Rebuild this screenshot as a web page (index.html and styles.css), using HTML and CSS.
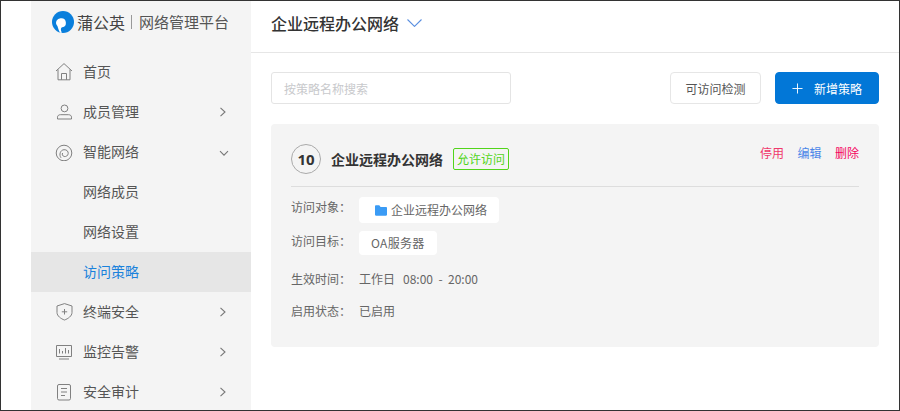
FILE: index.html
```html
<!DOCTYPE html>
<html lang="zh-CN">
<head>
<meta charset="utf-8">
<title>访问策略</title>
<link rel="stylesheet" href="styles.css">
</head>
<body>
<div class="frame">
  <aside class="sidebar">
    <div class="brand">
      <svg class="brand-logo" viewBox="0 0 22 22"><circle cx="11" cy="11" r="11" fill="#0a7fdc"/><path d="M9 7.200A4.600 4.600 0 0 1 10.200 16.300C8.800 16.800 8.300 18.500 9.800 21.800L8 21.800C6.800 19.500 6.200 17.500 5.400 15A4.600 4.600 0 0 1 9 7.200Z" fill="#fff"/></svg>
      <span class="brand-name">蒲公英</span>
      <span class="brand-sep"></span>
      <span class="brand-sub">网络管理平台</span>
    </div>
    <nav class="menu">
      <a class="item">
        <svg class="ico" viewBox="0 0 18 18"><path d="M1 8L9 .6L17 8M3 6.400V16.800H15V6.400M6.500 16.800V10.500H11.500V16.800"/></svg>
        <span class="label">首页</span>
      </a>
      <a class="item">
        <svg class="ico" viewBox="0 0 18 18"><circle cx="9.500" cy="5.400" r="3.400"/><path d="M2.500 16V14.200C2.500 12.700 3.700 11.700 5.500 11.700H13.500C15.300 11.700 16.500 12.700 16.500 14.200V16Z"/></svg>
        <span class="label">成员管理</span>
        <svg class="arrow" viewBox="0 0 10 10"><path d="M2.500 .8L7 5L2.500 9.200"/></svg>
      </a>
      <a class="item">
        <svg class="ico" viewBox="0 0 18 18"><circle cx="9" cy="10" r="7.800"/><path d="M6 14.800C3.800 11.800 5.200 7 9 6.700C11.800 6.500 13.400 8.500 13.200 10.500C13 12.700 11 13.900 9.200 13.500C7.600 13.100 6.800 11.500 7.600 10"/></svg>
        <span class="label">智能网络</span>
        <svg class="arrow" viewBox="0 0 10 10"><path d="M2 4.200L6 8.200L10 4.200"/></svg>
      </a>
      <a class="item sub"><span class="label">网络成员</span></a>
      <a class="item sub"><span class="label">网络设置</span></a>
      <a class="item sub active"><span class="label">访问策略</span></a>
      <a class="item">
        <svg class="ico" viewBox="0 0 18 18"><path d="M9.500 .6L17 3V9.500C17 13 13 15.800 9.500 17C6 15.800 2 13 2 9.500V3Z"/><path d="M9.500 6V11.500M6.800 8.800H12.200"/></svg>
        <span class="label">终端安全</span>
        <svg class="arrow" viewBox="0 0 10 10"><path d="M2.500 .8L7 5L2.500 9.200"/></svg>
      </a>
      <a class="item">
        <svg class="ico" viewBox="0 0 18 18"><path d="M1.500 2.500H16.500V13.500H1.500ZM4 16H14M4.500 6V10.500M7.500 8V10.500M10.500 5V10.500M13.500 7V10.500"/></svg>
        <span class="label">监控告警</span>
        <svg class="arrow" viewBox="0 0 10 10"><path d="M2.500 .8L7 5L2.500 9.200"/></svg>
      </a>
      <a class="item">
        <svg class="ico" viewBox="0 0 18 18"><rect x="2.500" y="1.500" width="13" height="15.500" rx="1.500"/><path d="M6 5.500H12M6 9H12M6 12.500H10"/></svg>
        <span class="label">安全审计</span>
        <svg class="arrow" viewBox="0 0 10 10"><path d="M2.500 .8L7 5L2.500 9.200"/></svg>
      </a>
    </nav>
  </aside>
  <main class="main">
    <header class="topbar">
      <h1 class="title">企业远程办公网络</h1>
      <svg class="title-caret" viewBox="0 0 15 8"><path d="M.5 .5L7.500 7.400L14.500 .5"/></svg>
    </header>
    <section class="content">
      <div class="toolbar">
        <div class="search">按策略名称搜索</div>
        <div class="actions">
          <button class="btn">可访问检测</button>
          <button class="btn primary"><svg class="plus" viewBox="0 0 12 12"><path d="M6 .5V11.500M.5 6H11.500"/></svg><span>新增策略</span></button>
        </div>
      </div>
      <article class="card">
        <div class="card-head">
          <span class="num">10</span>
          <h2 class="card-title">企业远程办公网络</h2>
          <span class="tag">允许访问</span>
          <div class="ops">
            <a class="op stop">停用</a>
            <a class="op edit">编辑</a>
            <a class="op del">删除</a>
          </div>
        </div>
        <div class="row r-obj">
          <span class="key">访问对象：</span>
          <span class="chip">
            <svg class="folder" viewBox="0 0 14 12"><path d="M0 1C0 .4.400 0 1 0H5L6.500 1.800H13C13.600 1.800 14 2.200 14 2.800V11C14 11.600 13.600 12 13 12H1C.4 12 0 11.600 0 11Z"/></svg>企业远程办公网络
          </span>
        </div>
        <div class="row r-target">
          <span class="key">访问目标：</span>
          <span class="chip">OA服务器</span>
        </div>
        <div class="row r-time">
          <span class="key">生效时间：</span>
          <span class="val">工作日<span class="hours">08:00 - 20:00</span></span>
        </div>
        <div class="row r-state">
          <span class="key">启用状态：</span>
          <span class="val">已启用</span>
        </div>
      </article>
    </section>
  </main>
</div>
</body>
</html>
```
FILE: styles.css
```css
* { box-sizing: border-box; }
html, body { margin: 0; padding: 0; height: 411px; overflow: hidden; background: #fff; }
body { font-family: "Noto Sans CJK SC", "Noto Sans", sans-serif; font-size: 13px; color: #555; }
.frame { width: 900px; height: 411px; border: 1px solid #333; display: flex; overflow: hidden; padding-left: 30px; }
.sidebar { width: 220px; flex: none; height: 409px; background: #f4f4f4; }
.brand { height: 51px; padding: 0 0 9px 21px; display: flex; align-items: center; }
.brand-logo { width: 22px; height: 22px; flex: none; }
.brand-name { font-size: 16px; color: #444; margin-left: 3px; line-height: 22px; }
.brand-sep { width: 1px; height: 14px; background: #999; margin: 0 7px 0 6px; }
.brand-sub { font-size: 15px; color: #555; line-height: 22px; }
.menu { display: flex; flex-direction: column; }
.item { height: 40px; display: flex; align-items: center; padding-left: 24px; position: relative; }
.ico { width: 18px; height: 18px; flex: none; fill: none; stroke: #808080; stroke-width: 1; margin-right: 10px; }
.label { font-size: 14px; color: #555; line-height: 20px; margin-bottom: 2px; }
.sub { padding-left: 52px; }
.active { background: #e6e6e6; }
.active .label { color: #1a82dc; }
.arrow { position: absolute; left: 187px; top: 15px; width: 10px; height: 10px; fill: none; stroke: #777; stroke-width: 1.100; overflow: visible; }
.main { flex: 1; min-width: 0; display: flex; flex-direction: column; }
.topbar { height: 52px; flex: none; border-bottom: 1px solid #e6e6e6; display: flex; align-items: center; padding: 0 20px 8px; }
.title { margin: 0; font-size: 16px; font-weight: 500; color: #333; line-height: 24px; }
.title-caret { width: 15px; height: 8px; margin-left: 8px; fill: none; stroke: #5a8fe0; stroke-width: 1.100; }
.content { padding: 19px 20px 0; }
.toolbar { display: flex; justify-content: space-between; align-items: center; height: 32px; }
.search { width: 240px; height: 32px; border: 1px solid #e4e4e4; border-radius: 3px; padding-left: 12px; font-size: 12px; color: #c8c9cc; line-height: 31px; }
.actions { display: flex; gap: 14px; }
.btn { height: 32px; width: 91px; border: 1px solid #e6e6e6; border-radius: 4px; background: #fff; font: inherit; font-size: 12px; color: #555; padding: 0; }
.primary { width: 104px; background: #0277d7; border-color: #0277d7; color: #fff; display: flex; align-items: center; padding-left: 16px; gap: 11px; }
.plus { width: 11px; height: 11px; fill: none; stroke: #fff; stroke-width: 1; }
.card { margin-top: 20px; width: 608px; height: 223px; background: #f4f4f4; border-radius: 4px; padding: 20px; }
.card-head { height: 43px; display: flex; align-items: flex-start; border-bottom: 1px solid #ddd; }
.num { width: 30px; height: 30px; border: 1px solid #aaa; border-radius: 50%; font-size: 15px; font-weight: 700; color: #333; line-height: 28px; text-align: center; font-family: "Noto Sans", sans-serif; }
.card-title { margin: 0 0 0 10px; font-size: 14px; font-weight: 700; color: #333; line-height: 30px; }
.tag { margin: 4px 0 0 10px; height: 22px; padding: 0 3px; border: 1px solid #52d41a; border-radius: 2px; color: #52d41a; font-size: 12px; line-height: 20px; }
.ops { margin-left: auto; display: flex; gap: 13.500px; line-height: 18px; font-size: 12px; }
.stop { color: #f0386b; }
.edit { color: #4a86e8; }
.del { color: #f5045e; }
.row { display: flex; font-size: 12px; color: #666; }
.key { width: 68px; flex: none; line-height: 18px; }
.r-obj .key, .r-target .key { padding-top: 1px; }
.r-obj { margin-top: 10px; }
.r-target { margin-top: 8px; }
.r-time { margin-top: 15px; }
.r-state { margin-top: 14px; }
.chip { background: #fff; border-radius: 4px; height: 26px; padding: 0 12px 0 16px; line-height: 26px; display: flex; align-items: center; }
.r-target .chip { height: 24px; padding: 0 12px; letter-spacing: .3px; }
.folder { width: 12px; height: 11px; fill: #3a9bf5; margin-right: 4px; }
.val { line-height: 18px; }
.hours { margin-left: 8px; word-spacing: 2.750px; }
```
